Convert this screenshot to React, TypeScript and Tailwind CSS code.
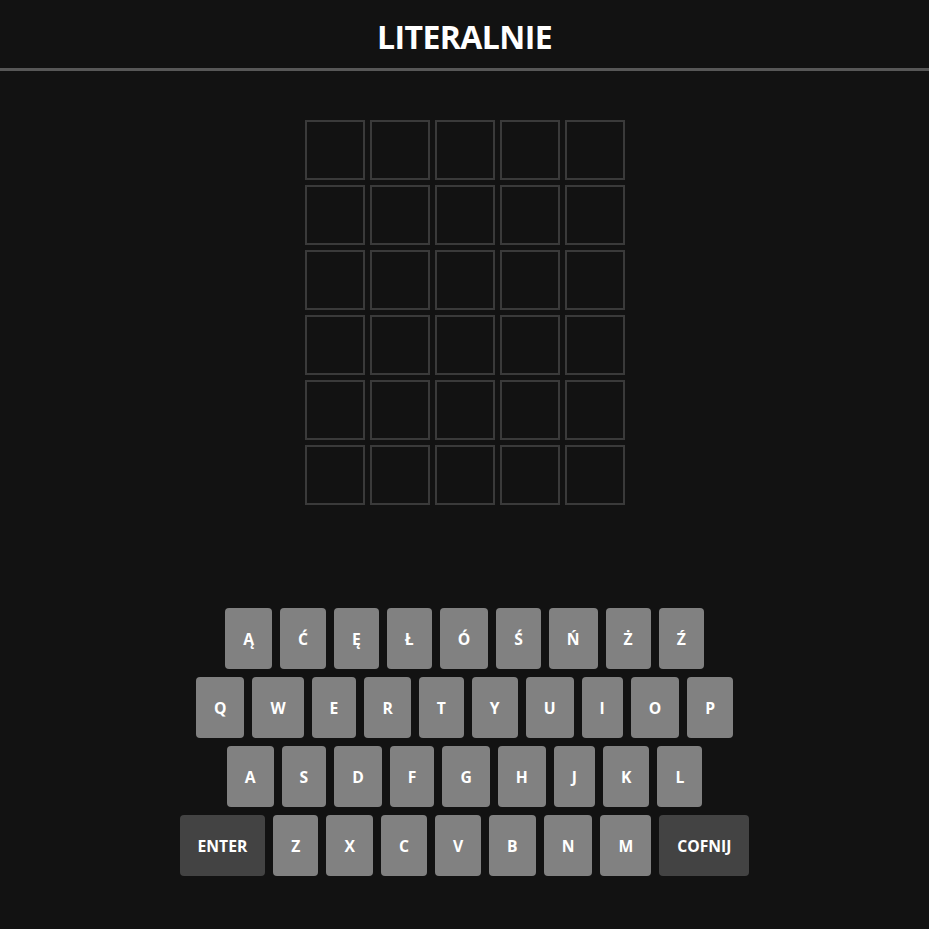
const rows = [
  ["Ą", "Ć", "Ę", "Ł", "Ó", "Ś", "Ń", "Ż", "Ź"],
  ["Q", "W", "E", "R", "T", "Y", "U", "I", "O", "P"],
  ["A", "S", "D", "F", "G", "H", "J", "K", "L"],
  ["ENTER", "Z", "X", "C", "V", "B", "N", "M", "COFNIJ"],
];

function Key({ label }: { label: string }) {
  const special = label.length > 1;
  return (
    <button
      className={
        "h-[61px] px-[18px] pt-[2px] rounded flex items-center justify-center text-white font-bold text-[15.7px] " +
        (special ? "bg-[#434343]" : "bg-[#818181]")
      }
    >
      {label}
    </button>
  );
}

export default function App() {
  return (
    <div
      className="h-screen flex flex-col bg-[#121212] text-white"
      style={{ fontFamily: '"Open Sans", "Noto Sans", sans-serif' }}
    >
      <header className="h-[71px] flex items-center justify-center border-b-[3px] border-[#575757]">
        <h1 className="text-[32px] font-bold leading-none mt-[6px] tracking-[-0.6px]">LITERALNIE</h1>
      </header>

      <main className="flex-1 flex flex-col items-center pt-[49px]">
        <div className="grid grid-cols-5 gap-[5px]">
          {Array.from({ length: 30 }).map((_, i) => (
            <div key={i} className="w-[60px] h-[60px] border-2 border-[#3a3a3a]" />
          ))}
        </div>

        <div className="flex-1" />

        <div className="flex flex-col items-center gap-2 pb-[53px]">
          {rows.map((row, r) => (
            <div key={r} className="flex gap-2">
              {row.map((k) => (
                <Key key={k} label={k} />
              ))}
            </div>
          ))}
        </div>
      </main>
    </div>
  );
}
